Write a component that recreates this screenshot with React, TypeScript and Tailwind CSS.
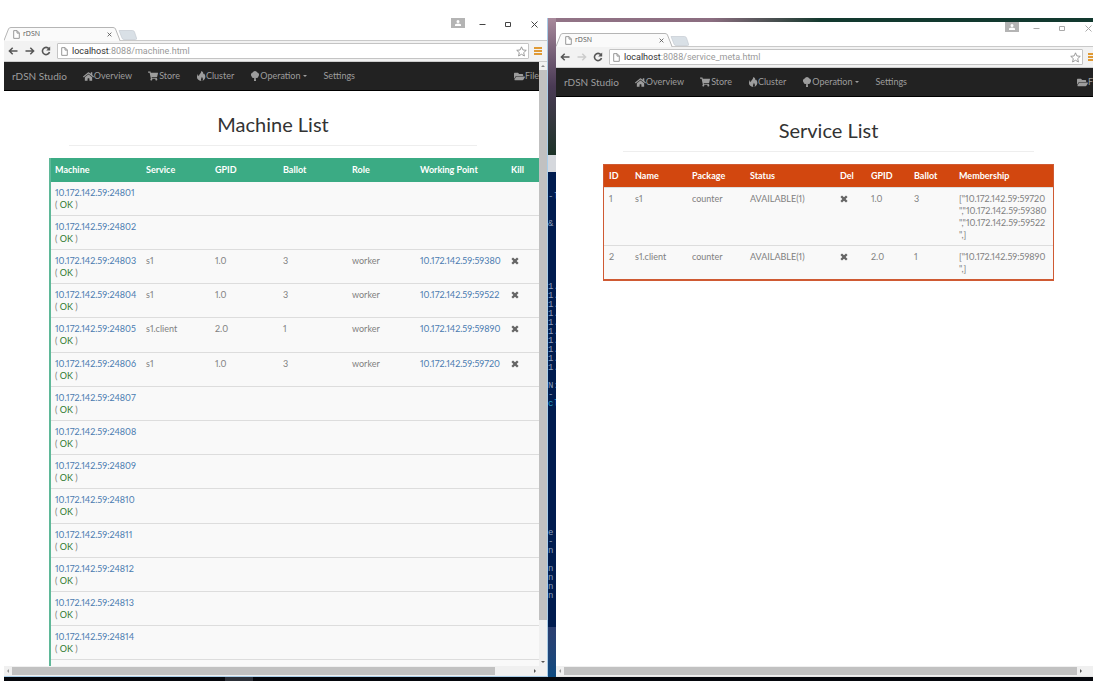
import type { ReactNode } from "react";
import { FaFolderOpen, FaHome, FaShoppingCart } from "react-icons/fa";

type Machine = {
  host: string;
  service?: string;
  gpid?: string;
  ballot?: string;
  role?: string;
  point?: string;
};

const machines: Machine[] = [
  { host: "10.172.142.59:24801" },
  { host: "10.172.142.59:24802" },
  { host: "10.172.142.59:24803", service: "s1", gpid: "1.0", ballot: "3", role: "worker", point: "10.172.142.59:59380" },
  { host: "10.172.142.59:24804", service: "s1", gpid: "1.0", ballot: "3", role: "worker", point: "10.172.142.59:59522" },
  { host: "10.172.142.59:24805", service: "s1.client", gpid: "2.0", ballot: "1", role: "worker", point: "10.172.142.59:59890" },
  { host: "10.172.142.59:24806", service: "s1", gpid: "1.0", ballot: "3", role: "worker", point: "10.172.142.59:59720" },
  { host: "10.172.142.59:24807" },
  { host: "10.172.142.59:24808" },
  { host: "10.172.142.59:24809" },
  { host: "10.172.142.59:24810" },
  { host: "10.172.142.59:24811" },
  { host: "10.172.142.59:24812" },
  { host: "10.172.142.59:24813" },
  { host: "10.172.142.59:24814" },
];

const services = [
  {
    id: "1",
    name: "s1",
    gpid: "1.0",
    ballot: "3",
    members: ['["10.172.142.59:59720', '","10.172.142.59:59380', '","10.172.142.59:59522', '",]'],
  },
  { id: "2", name: "s1.client", gpid: "2.0", ballot: "1", members: ['["10.172.142.59:59890', '",]'] },
];

function PageIcon({ className }: { className: string }) {
  return (
    <svg viewBox="0 0 8 10" className={className} fill="#fff" stroke="#8a8a8a" strokeWidth="1">
      <path d="M.8.6h3.9l2.5 2.6v6.2H.8zM4.6.8v2.6h2.5" />
    </svg>
  );
}

function FireIcon() {
  return (
    <svg viewBox="0 0 20 20" className="size-[10px]" fill="currentColor">
      <path d="M10.500 0c4.300 1.600 4.500 4 3.300 6.500.9-.2 1.500-.9 1.700-2 4 4 5.500 11-2.500 15.500 1.700-3.200.7-6.400-1.400-8.500-.2 2.400-1.200 3.200-1.600 5-.1 1.200.2 2.300.9 3.300C1.500 19 0 12 4 5.500c-.2 2.200.2 3.600 1.500 4.800C6.300 6.500 11 4.500 10.500 0z" />
    </svg>
  );
}

function TreeIcon() {
  return (
    <svg viewBox="0 0 20 20" className="size-[10px]" fill="currentColor">
      <path d="M10 0a5 5 0 0 1 4.600 3.100A4.600 4.600 0 0 1 17 10.500a4 4 0 0 1-5.500 3l.5 6.500H8l.5-6.500a4 4 0 0 1-5.500-3 4.600 4.600 0 0 1 2.400-7.400A5 5 0 0 1 10 0z" />
    </svg>
  );
}

function RemoveButton({ label }: { label: string }) {
  return (
    <button type="button" aria-label={label} className="block pt-[2px] text-[#666]">
      <svg viewBox="0 0 16 16" className="size-2" fill="currentColor">
        <path d="M4 .8 8 4.700 12 .8 15.200 4 11.300 8l3.900 4L12 15.200 8 11.300 4 15.200.8 12l3.900-4L.8 4z" />
      </svg>
    </button>
  );
}

function TitleBar({ dim, className }: { dim: boolean; className: string }) {
  return (
    <div className={`flex shrink-0 items-end justify-between border-b border-[#c9c9c9] bg-white ${className}`}>
      <div className="relative -mb-px h-[14px] w-[134px]">
        <svg viewBox="0 0 134 14" className="absolute inset-0 h-[14px] w-[134px]">
          <path d="M115 3.500h13.500q1.500 0 2 1.500l2 6q.5 1.500-1 1.500H120q-1.500 0-2-1.500z" fill="#d9e0e6" stroke="#c5ccd2" strokeWidth=".7" />
          <path d="M0 13.500 4.500 2Q5 .5 7 .5h102q2 0 2.500 1.500l4 11.500V14H0z" fill="#fafafa" />
          <path d="M0 13.500 4.500 2Q5 .5 7 .5h102q2 0 2.500 1.500l4.500 11.500" fill="none" stroke="#b5b5b5" />
        </svg>
        <div className="relative flex h-[15px] items-center pr-[26px] pl-[9px]">
          <PageIcon className="h-[9px] w-[7px]" />
          <span className="ml-[3px] font-['Open_Sans',sans-serif] text-[7px] text-[#555]">rDSN</span>
          <button type="button" aria-label="Close tab" className="ml-auto">
            <svg viewBox="0 0 6 6" className="size-[5px]" stroke="#555" strokeWidth="1">
              <path d="m.7.7 4.600 4.600M5.300.7.700 5.300" />
            </svg>
          </button>
        </div>
      </div>
      <div className={`flex h-full items-start pr-[9px] ${dim ? "text-[#aaa]" : "text-[#444]"}`}>
        <button type="button" aria-label="Profile" className="bg-[#b4b4b4] px-[4px] py-[2px]">
          <svg viewBox="0 0 6 6" className="size-[6px]" fill="#fff">
            <path d="M3 0a1.500 1.500 0 1 1 0 3 1.500 1.500 0 0 1 0-3zM0 6V5q0-1.500 3-1.500T6 5v1z" />
          </svg>
        </button>
        <button type="button" aria-label="Minimize" className="mt-[3px] ml-[14px]">
          <svg viewBox="0 0 7 7" className="size-[7px]" stroke="currentColor">
            <path d="M.5 3.500h6" />
          </svg>
        </button>
        <button type="button" aria-label="Maximize" className="mt-[3px] ml-[19px]">
          <svg viewBox="0 0 7 7" className="size-[7px]" fill="none" stroke="currentColor">
            <path d="M.5 1.500h5v4h-5z" />
          </svg>
        </button>
        <button type="button" aria-label="Close window" className="mt-[3px] ml-[19px]">
          <svg viewBox="0 0 7 7" className="size-[7px]" stroke="currentColor">
            <path d="m.5.5 6 6m0-6-6 6" />
          </svg>
        </button>
      </div>
    </div>
  );
}

function ArrowIcon({ className }: { className: string }) {
  return (
    <svg viewBox="0 0 10 8" className={className} fill="none" stroke="currentColor" strokeWidth="1.500">
      <path d="M9.500 4H1.500M4.700.8 1.400 4l3.300 3.200" />
    </svg>
  );
}

function Toolbar({ path, canForward }: { path: string; canForward: boolean }) {
  return (
    <div className="flex h-[21px] shrink-0 items-center border-b border-[#ccc] bg-[#f2f2f2] pr-[5px] pl-1">
      <button type="button" aria-label="Back" className="text-[#555]">
        <ArrowIcon className="h-2 w-[10px]" />
      </button>
      <button type="button" aria-label="Forward" className={`ml-[7px] ${canForward ? "text-[#555]" : "text-[#ccc]"}`}>
        <ArrowIcon className="h-2 w-[10px] rotate-180" />
      </button>
      <button type="button" aria-label="Reload" className="ml-[6px]">
        <svg viewBox="0 0 10 10" className="size-[10px]" fill="none" stroke="#555" strokeWidth="1.600">
          <path d="M7.900 2.800A3.600 3.600 0 1 0 8.500 6" />
          <path d="M9.200.6v4H5.200z" fill="#555" stroke="none" />
        </svg>
      </button>
      <div className="ml-[6px] flex h-4 flex-1 items-center rounded-[1px] border border-[#c4c4c4] bg-white pr-px pl-[3px]">
        <PageIcon className="h-[9px] w-[7px]" />
        <a href="#" className="ml-1 font-[Roboto,sans-serif] text-[9px] leading-3 text-[#999]">
          <span className="text-[#333]">localhost</span>:8088/{path}
        </a>
        <button type="button" aria-label="Bookmark" className="ml-auto">
          <svg viewBox="0 0 12 12" className="size-[11px]" fill="#fff" stroke="#888" strokeWidth=".9">
            <path d="m6 .9 1.500 3.400 3.700.4-2.800 2.500.8 3.700L6 9l-3.200 1.900.8-3.700L.8 4.700l3.700-.4z" />
          </svg>
        </button>
      </div>
      <button type="button" aria-label="Menu" className="ml-[5px]">
        <svg viewBox="0 0 8 8" className="size-2" stroke="#e09a35" strokeWidth="1.800">
          <path d="M0 1h8M0 4h8M0 7h8" />
        </svg>
      </button>
    </div>
  );
}

function NavLink({ icon, children }: { icon?: ReactNode; children: ReactNode }) {
  return (
    <a href="#" className="flex shrink-0 items-center">
      {icon}
      {children}
    </a>
  );
}

function Navbar({ endClass }: { endClass: string }) {
  return (
    <nav className="flex h-[29px] shrink-0 items-center gap-4 overflow-hidden border-b border-black bg-[#222] pl-2 text-[9px] whitespace-nowrap text-[#9d9d9d]">
      <a href="#" className="text-[10px]">
        rDSN Studio
      </a>
      <NavLink icon={<FaHome className="size-[11px]" />}>Overview</NavLink>
      <NavLink icon={<FaShoppingCart className="mr-px size-[10px]" />}>Store</NavLink>
      <NavLink icon={<FireIcon />}>Cluster</NavLink>
      <NavLink icon={<TreeIcon />}>
        Operation
        <svg viewBox="0 0 4 2" className="ml-[3px] h-[2px] w-1" fill="currentColor">
          <path d="M0 0h4L2 2z" />
        </svg>
      </NavLink>
      <NavLink>Settings</NavLink>
      <div className={`ml-auto shrink-0 ${endClass}`}>
        <NavLink icon={<FaFolderOpen className="size-[11px] shrink-0" />}>File</NavLink>
      </div>
    </nav>
  );
}

function PageTitle({ children }: { children: ReactNode }) {
  return (
    <h1 className="mx-5 mb-3 border-b border-[#eee] pt-5 pb-2 text-center text-[20px] leading-[26px] text-[#333]">
      {children}
    </h1>
  );
}

function HorizontalScroll({ thumbClass }: { thumbClass: string }) {
  return (
    <div className="flex h-[10px] shrink-0 items-center bg-[#f0f0f0]">
      <svg viewBox="0 0 8 8" className="size-2 shrink-0" fill="#999">
        <path d="M5 2v4L3 4z" />
      </svg>
      <div className={`h-2 bg-[#c1c1c1] ${thumbClass}`} />
      <svg viewBox="0 0 8 8" className="mr-2 ml-auto size-2 shrink-0" fill="#555">
        <path d="M3 2v4l2-2z" />
      </svg>
    </div>
  );
}

function MachineWindow() {
  return (
    <section className="flex min-w-0 flex-col overflow-hidden border-r border-[#a9cde8] bg-white">
      <TitleBar dim={false} className="h-[23px]" />
      <Toolbar path="machine.html" canForward />
      <div className="flex min-h-0 flex-1">
        <div className="flex min-w-0 flex-1 flex-col overflow-hidden">
          <Navbar endClass="w-[25px]" />
          <main className="min-h-0 flex-1 overflow-hidden pr-[42px] pl-[45px]">
            <PageTitle>Machine List</PageTitle>
            <table className="w-[520px] table-fixed border-separate border-spacing-0 border-l-2 border-[#5fb898] bg-[#f9f9f9] text-left text-[9px] leading-3 text-[#808080] proportional-nums">
              <colgroup>
                <col className="w-[91px]" />
                <col className="w-[69px]" />
                <col className="w-[68px]" />
                <col className="w-[69px]" />
                <col className="w-[68px]" />
                <col className="w-[91px]" />
                <col />
              </colgroup>
              <thead className="bg-[#3bab84] text-white">
                <tr>
                  {["Machine", "Service", "GPID", "Ballot", "Role", "Working Point", "Kill"].map((h) => (
                    <th key={h} className="px-1 py-[6px] font-bold">
                      {h}
                    </th>
                  ))}
                </tr>
              </thead>
              <tbody>
                {machines.map((m) => (
                  <tr
                    key={m.host}
                    className="align-top *:border-b *:border-[#ddd] *:px-1 *:pt-[5px] *:pb-1 nth-[5n]:*:pb-[5px]"
                  >
                    <td className="whitespace-nowrap">
                      <a href="#" className="text-[#4a7bb0]">
                        {m.host}
                      </a>
                      <br />( <span className="text-[#2f7a2f]">OK</span> )
                    </td>
                    <td>{m.service}</td>
                    <td>{m.gpid}</td>
                    <td>{m.ballot}</td>
                    <td>{m.role}</td>
                    <td className="whitespace-nowrap">
                      {m.point && (
                        <a href="#" className="text-[#4a7bb0]">
                          {m.point}
                        </a>
                      )}
                    </td>
                    <td>{m.point && <RemoveButton label={`Kill ${m.point}`} />}</td>
                  </tr>
                ))}
                <tr>
                  <td colSpan={7} className="h-[34px]" />
                </tr>
              </tbody>
            </table>
          </main>
        </div>
        <div className="flex w-2 shrink-0 flex-col items-center bg-[#f0f0f0]">
          <svg viewBox="0 0 8 8" className="size-2 shrink-0" fill="#888">
            <path d="M2 5h4L4 3z" />
          </svg>
          <div className="h-[91%] w-2 bg-[#c1c1c1]" />
          <svg viewBox="0 0 8 8" className="mt-auto size-2 shrink-0" fill="#555">
            <path d="M2 3h4L4 5z" />
          </svg>
        </div>
      </div>
      <HorizontalScroll thumbClass="w-[89%]" />
      <div className="h-px shrink-0 bg-[#a9cde8]" />
    </section>
  );
}

function ServiceWindow() {
  return (
    <section className="mt-1 flex min-w-0 flex-col overflow-hidden bg-white">
      <div className="-mr-2 shrink-0">
        <TitleBar dim className="h-[25px]" />
        <Toolbar path="service_meta.html" canForward={false} />
      </div>
      <Navbar endClass="w-[16px]" />
      <main className="min-h-0 flex-1 overflow-hidden pr-[39px] pl-[47px]">
        <PageTitle>Service List</PageTitle>
        <table className="w-full table-fixed border-separate border-spacing-0 border border-b-2 border-[#cf5a33] bg-[#f9f9f9] text-left text-[9px] leading-3 text-[#808080] proportional-nums">
          <colgroup>
            <col className="w-[26px]" />
            <col className="w-[57px]" />
            <col className="w-[58px]" />
            <col className="w-[90px]" />
            <col className="w-[31px]" />
            <col className="w-[43px]" />
            <col className="w-[45px]" />
            <col />
          </colgroup>
          <thead className="bg-[#d2470f] text-white">
            <tr>
              {["ID", "Name", "Package", "Status", "Del", "GPID", "Ballot", "Membership"].map((h) => (
                <th key={h} className="px-[5px] py-[5px] font-bold">
                  {h}
                </th>
              ))}
            </tr>
          </thead>
          <tbody>
            {services.map((s) => (
              <tr key={s.id} className="align-top *:border-t *:border-[#ddd] *:px-[5px] *:pt-[5px] *:pb-1">
                <td>{s.id}</td>
                <td>{s.name}</td>
                <td>counter</td>
                <td>AVAILABLE(1)</td>
                <td>
                  <RemoveButton label={`Delete ${s.name}`} />
                </td>
                <td>{s.gpid}</td>
                <td>{s.ballot}</td>
                <td className="whitespace-pre">{s.members.join("\n")}</td>
              </tr>
            ))}
          </tbody>
        </table>
      </main>
      <HorizontalScroll thumbClass="w-[96%]" />
      <div className="h-px shrink-0 bg-[#e5e5e5]" />
    </section>
  );
}

const terminalTop = ["", "-l", "", "", "&", "", "", "", "", "", "", "1.", "1.", "1.", "1.", "1.", "1.", "1.", "1.", "1.", "1.", "", "N:", "-"];
const terminalBottom = ["e", "-", "n", "", "n", "n", "n", "n"];

function DesktopStrip() {
  return (
    <div className="flex flex-col overflow-hidden font-['Liberation_Mono',monospace] text-[9px] leading-[9px] whitespace-nowrap text-[#8fa0bd]">
      <div className="h-[137px] shrink-0 bg-linear-to-b from-[#a98a9c] via-[#4a3a55] to-[#1c3328]" />
      <div className="h-[17px] shrink-0 bg-[#d5d8dd]" />
      <div className="flex flex-1 flex-col bg-[#001c4f] pt-3">
        {terminalTop.map((line, i) => (
          <div key={i} className="h-[9px] shrink-0">
            {line}
          </div>
        ))}
        <div className="h-[9px] text-[#28a0c8]">cl</div>
        <div className="pt-[120px]">
          {terminalBottom.map((line, i) => (
            <div key={i} className="h-[9px]">
              {line}
            </div>
          ))}
        </div>
      </div>
      <div className="h-[50px] shrink-0 bg-linear-to-b from-[#2c3f70] to-[#0c4a80]" />
    </div>
  );
}

export default function App() {
  return (
    <div className="flex h-screen flex-col bg-white pt-[18px] pr-2 pl-1 font-[Lato,sans-serif]">
      <div className="grid min-h-0 flex-1 grid-cols-[544fr_8px_537fr] grid-rows-[minmax(0,1fr)] bg-linear-to-r from-[#a98a9c] via-[#8b6d80] via-65% to-[#12392f] to-75%">
        <MachineWindow />
        <DesktopStrip />
        <ServiceWindow />
      </div>
      <footer className="flex h-1 shrink-0 bg-[#05070c]">
        <div className="ml-[221px] w-7 bg-[#2c3038]" />
      </footer>
    </div>
  );
}
